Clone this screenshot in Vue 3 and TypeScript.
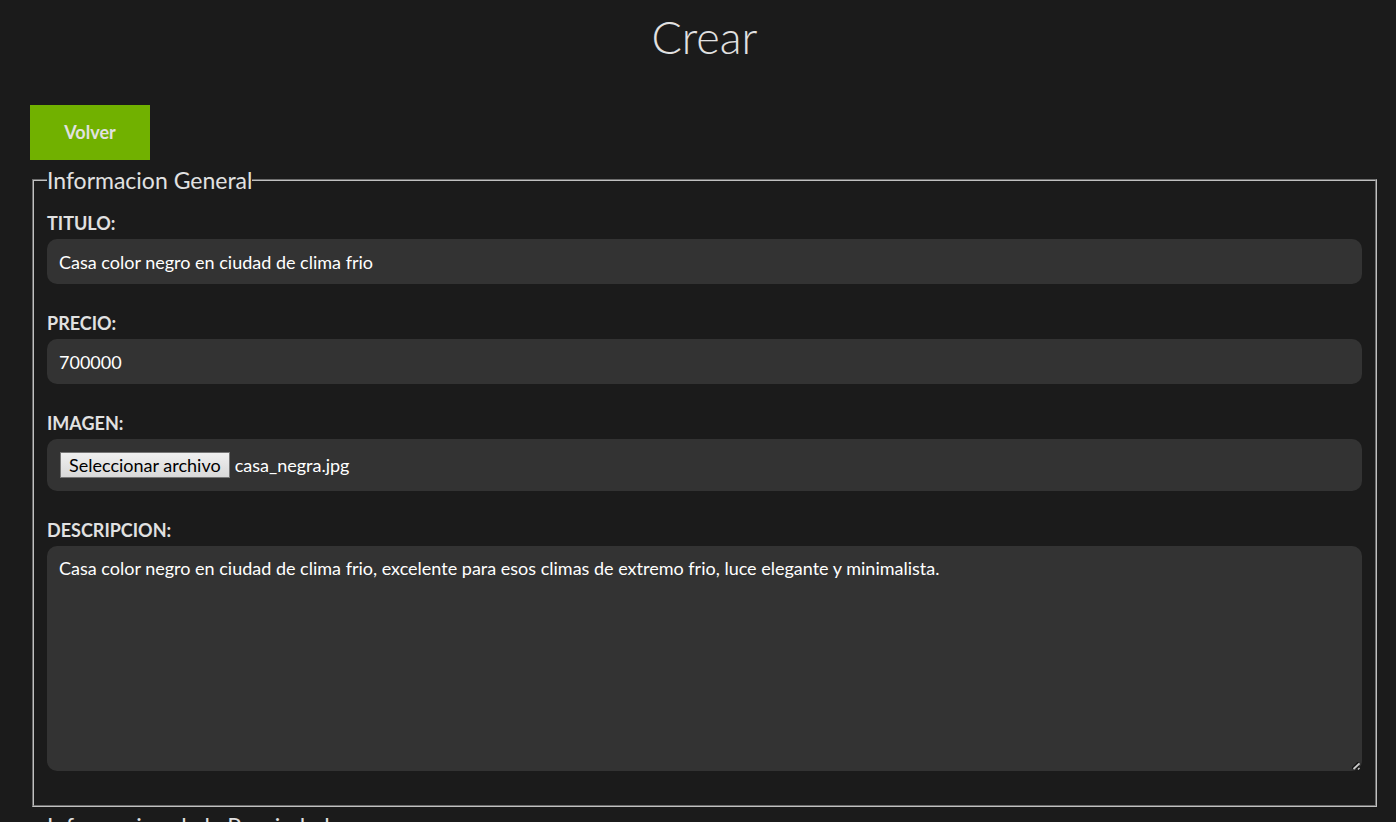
<script setup lang="ts">
import { ref } from 'vue'

const titulo = ref<string>('Casa color negro en ciudad de clima frio')
const precio = ref<string>('700000')
const archivo = ref<string>('casa_negra.jpg')
const descripcion = ref<string>(
  'Casa color negro en ciudad de clima frio, excelente para esos climas de extremo frio, luce elegante y minimalista.'
)

function elegirArchivo(event: Event): void {
  const input = event.target as HTMLInputElement
  const file = input.files?.[0]
  if (file) archivo.value = file.name
}
</script>

<template>
  <main class="page">
    <h1 class="title">Crear</h1>
    <a class="back" href="#">Volver</a>
    <form class="form" @submit.prevent>
      <fieldset class="group">
        <legend class="legend">Informacion General</legend>

        <label class="label" for="titulo">Titulo:</label>
        <input id="titulo" v-model="titulo" class="control" type="text" />

        <label class="label" for="precio">Precio:</label>
        <input id="precio" v-model="precio" class="control" type="text" inputmode="numeric" />

        <label class="label" for="imagen">Imagen:</label>
        <div class="control file">
          <span class="file-button">Seleccionar archivo</span>
          <span>{{ archivo }}</span>
          <input id="imagen" class="file-input" type="file" accept="image/jpeg, image/png" @change="elegirArchivo" />
        </div>

        <label class="label" for="descripcion">Descripcion:</label>
        <div class="area">
          <textarea id="descripcion" v-model="descripcion" class="control textarea"></textarea>
          <svg class="grip" viewBox="0 0 8 8" aria-hidden="true">
            <path d="M0 6.5 L6.5 0 M4 7 L7 4" stroke="#111" stroke-width="1.4" />
            <path d="M1.5 7 L7.5 1.5" stroke="#c8c8c8" stroke-width="1.8" />
            <path d="M6 7.5 L7.5 6" stroke="#c8c8c8" stroke-width="1.4" />
          </svg>
        </div>
      </fieldset>

      <fieldset class="group">
        <legend class="legend">Informacion de la Propiedad</legend>
      </fieldset>
    </form>
  </main>
</template>

<style>
body {
  margin: 0;
  background: #1b1b1b;
}
</style>

<style scoped>
.page {
  box-sizing: border-box;
  height: 100vh;
  overflow: hidden;
  padding: 0 17px 0 30px;
  background: #1b1b1b;
  color: #e1e1e1;
  font-family: Lato, "Liberation Sans", sans-serif;
  font-size: 18px;
}

.title {
  margin: 0 0 31px;
  font-size: 45px;
  font-weight: 300;
  line-height: 74px;
  text-align: center;
}

.back {
  display: block;
  box-sizing: border-box;
  width: 120px;
  background: #71b100;
  color: #e1e1e1;
  font-weight: 700;
  line-height: 55px;
  text-align: center;
  text-decoration: none;
}

.form {
  display: flex;
  flex-direction: column;
  gap: 5px;
  padding-top: 6px;
}

.group {
  min-width: 0;
  margin: 0 2px;
  padding: 13px 13px 11px;
  border: 2px groove #c0c0c0;
}

.legend {
  padding: 0;
  font-size: 23px;
  line-height: 28px;
}

.label {
  display: block;
  font-weight: 700;
  line-height: 32px;
  text-transform: uppercase;
}

.control {
  display: block;
  box-sizing: border-box;
  width: 100%;
  height: 45px;
  margin: 0 0 23px;
  padding: 12px;
  border: 0;
  border-radius: 10px;
  background: #333;
  color: #fff;
  font: inherit;
  line-height: 22px;
}

.file {
  position: relative;
  display: flex;
  align-items: center;
  gap: 5px;
  height: 52px;
  padding: 12px 13px;
}

.file-button {
  padding: 1px 8px;
  border: 1px solid #767676;
  background: linear-gradient(#efefef, #d9d9d9);
  color: #000;
}

.file-input {
  position: absolute;
  inset: 0;
  width: 100%;
  opacity: 0;
  cursor: pointer;
}

.area {
  position: relative;
}

.textarea {
  height: 225px;
  padding: 11px 12px;
  resize: vertical;
}

.textarea::-webkit-resizer {
  background: transparent;
}

.grip {
  position: absolute;
  right: 2px;
  bottom: 1px;
  width: 8px;
  height: 8px;
  fill: none;
  pointer-events: none;
}
</style>
